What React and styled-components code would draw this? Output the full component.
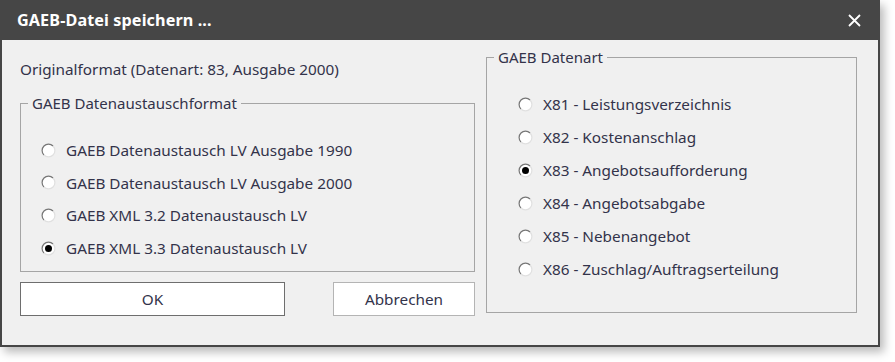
import React, { useState } from 'react';
import styled, { createGlobalStyle } from 'styled-components';

const GlobalStyle = createGlobalStyle`
  html, body {
    margin: 0;
    padding: 0;
    background: #ffffff;
  }
  body {
    font-family: "Noto Sans", "Open Sans", sans-serif;
  }
`;

const Page = styled.div`
  width: 895px;
  height: 362px;
  overflow: hidden;
`;

const Window = styled.div`
  width: 880px;
  height: 347px;
  box-sizing: border-box;
  display: flex;
  flex-direction: column;
  background: #f0f0f0;
  border: 2px solid #464646;
  border-top: none;
  box-shadow: 4px 5px 9px rgba(0, 0, 0, 0.28);
`;

const TitleBar = styled.div`
  height: 40px;
  flex: none;
  margin: 0 -2px;
  background: #464646;
  display: flex;
  align-items: center;
  justify-content: space-between;
  padding: 0 18px 0 17px;
`;

const Title = styled.span`
  color: #ffffff;
  font-weight: 700;
  font-size: 16.2px;
  letter-spacing: 0.1px;
`;

const CloseButton = styled.button`
  background: none;
  border: none;
  padding: 0;
  width: 16px;
  height: 16px;
  display: flex;
  align-items: center;
  justify-content: center;
  cursor: pointer;
`;

const Body = styled.div`
  flex: 1;
  display: flex;
  gap: 11px;
  padding: 0 21px 0 18px;
`;

const LeftColumn = styled.div`
  width: 455px;
  display: flex;
  flex-direction: column;
`;

const RightColumn = styled.div`
  flex: 1;
  display: flex;
  flex-direction: column;
  padding-top: 8px;
`;

const InfoText = styled.div`
  font-size: 15.3px;
  color: #33334a;
  height: 20px;
  line-height: 20px;
  margin-top: 19px;
`;

const Group = styled.fieldset`
  margin: ${p => p.$top}px 0 0 0;
  padding: ${p => p.$padTop}px 0 0 0;
  height: ${p => p.$height}px;
  box-sizing: border-box;
  border: 1px solid #a5a5a5;
  min-width: 0;
`;

const Legend = styled.legend`
  font-size: 15px;
  color: #33334a;
  padding: 0 4px;
  margin-left: 7px;
  line-height: 18px;
`;

const OptionList = styled.div`
  display: flex;
  flex-direction: column;
  gap: ${p => p.$gap}px;
  padding-left: ${p => p.$indent}px;
`;

const Option = styled.label`
  display: flex;
  align-items: center;
  gap: 10px;
  height: 22px;
  font-size: 15.3px;
  color: #33334a;
  cursor: pointer;
  white-space: nowrap;
`;

const ButtonRow = styled.div`
  display: flex;
  justify-content: space-between;
  margin-top: 10px;
`;

const Button = styled.button`
  height: 34px;
  width: ${p => p.$width}px;
  box-sizing: border-box;
  background: #ffffff;
  border: 1px solid ${p => (p.$primary ? '#6e6e6e' : '#b4b4b4')};
  font-family: inherit;
  font-size: 15.3px;
  color: #33334a;
  padding: 0;
  cursor: pointer;
`;

const RadioDot = ({ checked }) => (
  <svg width="15" height="15" viewBox="0 0 15 15">
    <circle cx="7.5" cy="7.5" r="6.4" fill="#ffffff" />
    <path d="M2.97 12.03 A6.4 6.4 0 0 1 12.03 2.97" fill="none" stroke="#767676" strokeWidth="1.2" />
    <path d="M12.03 2.97 A6.4 6.4 0 0 1 2.97 12.03" fill="none" stroke="#e0e0e0" strokeWidth="1.2" />
    {checked && <circle cx="7.5" cy="7.5" r="3.5" fill="#000000" />}
  </svg>
);

const Radio = ({ checked, label, onSelect }) => (
  <Option onClick={onSelect}>
    <RadioDot checked={checked} />
    {label}
  </Option>
);

const formats = [
  'GAEB Datenaustausch LV Ausgabe 1990',
  'GAEB Datenaustausch LV Ausgabe 2000',
  'GAEB XML 3.2 Datenaustausch LV',
  'GAEB XML 3.3 Datenaustausch LV',
];

const types = [
  'X81 - Leistungsverzeichnis',
  'X82 - Kostenanschlag',
  'X83 - Angebotsaufforderung',
  'X84 - Angebotsabgabe',
  'X85 - Nebenangebot',
  'X86 - Zuschlag/Auftragserteilung',
];

const App = () => {
  const [format, setFormat] = useState(3);
  const [type, setType] = useState(2);

  return (
    <>
      <GlobalStyle />
      <Page>
        <Window>
          <TitleBar>
            <Title>GAEB-Datei speichern ...</Title>
            <CloseButton title="Schließen">
              <svg width="13" height="13" viewBox="0 0 13 13">
                <path d="M1 1 L12 12 M12 1 L1 12" stroke="#ffffff" strokeWidth="1.8" />
              </svg>
            </CloseButton>
          </TitleBar>
          <Body>
            <LeftColumn>
              <InfoText>Originalformat (Datenart: 83, Ausgabe 2000)</InfoText>
              <Group $top={15} $padTop={27} $height={178}>
                <Legend>GAEB Datenaustauschformat</Legend>
                <OptionList $gap={10.7} $indent={20}>
                  {formats.map((f, i) => (
                    <Radio key={f} label={f} checked={format === i} onSelect={() => setFormat(i)} />
                  ))}
                </OptionList>
              </Group>
              <ButtonRow>
                <Button $primary $width={265}>OK</Button>
                <Button $width={142}>Abbrechen</Button>
              </ButtonRow>
            </LeftColumn>
            <RightColumn>
              <Group $top={0} $padTop={27} $height={265}>
                <Legend>GAEB Datenart</Legend>
                <OptionList $gap={11} $indent={31}>
                  {types.map((t, i) => (
                    <Radio key={t} label={t} checked={type === i} onSelect={() => setType(i)} />
                  ))}
                </OptionList>
              </Group>
            </RightColumn>
          </Body>
        </Window>
      </Page>
    </>
  );
};

export default App;
